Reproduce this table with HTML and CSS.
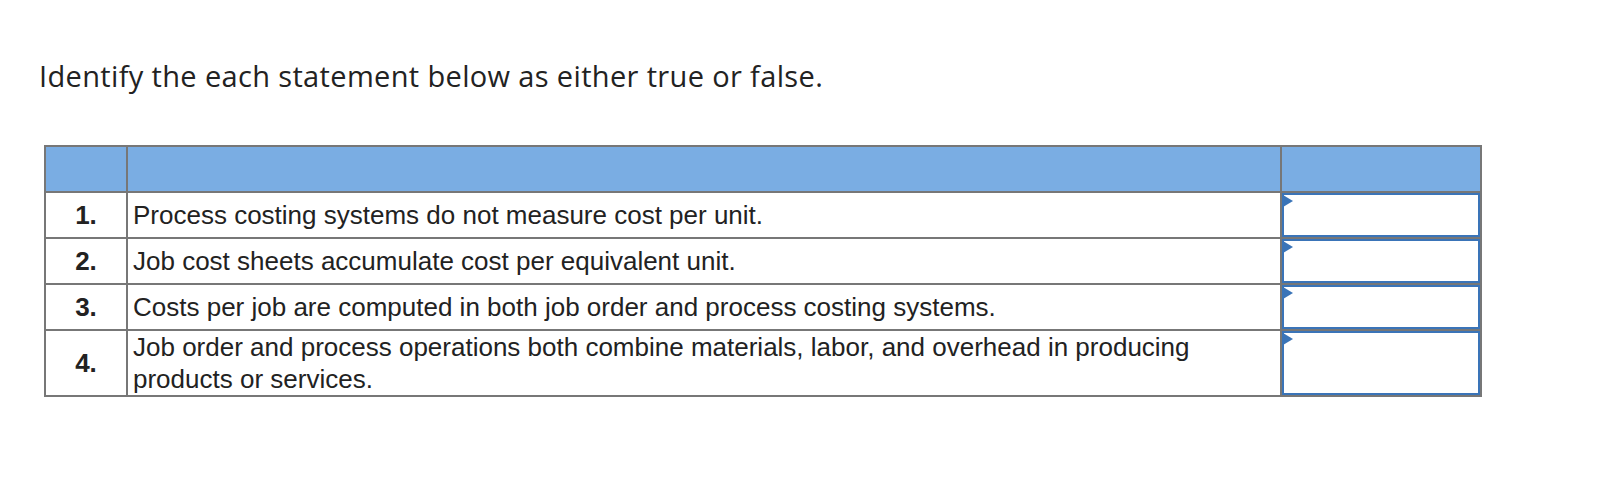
FILE: index.html
```html
<!DOCTYPE html>
<html>
<head>
<meta charset="utf-8">
<link rel="stylesheet" href="styles.css">
</head>
<body>
<div class="page">
  <p class="prompt">Identify the each statement below as either true or false.</p>
  <table class="tf">
    <thead>
      <tr><th class="num"></th><th class="stmt"></th><th class="ans"></th></tr>
    </thead>
    <tbody>
      <tr>
        <td class="num">1.</td>
        <td class="stmt">Process costing systems do not measure cost per unit.</td>
        <td class="ans"><div class="box"><span class="flag"></span></div></td>
      </tr>
      <tr>
        <td class="num">2.</td>
        <td class="stmt">Job cost sheets accumulate cost per equivalent unit.</td>
        <td class="ans"><div class="box"><span class="flag"></span></div></td>
      </tr>
      <tr>
        <td class="num">3.</td>
        <td class="stmt">Costs per job are computed in both job order and process costing systems.</td>
        <td class="ans"><div class="box"><span class="flag"></span></div></td>
      </tr>
      <tr>
        <td class="num">4.</td>
        <td class="stmt">Job order and process operations both combine materials, labor, and overhead in producing<br>products or services.</td>
        <td class="ans"><div class="box tall"><span class="flag"></span></div></td>
      </tr>
    </tbody>
  </table>
</div>
</body>
</html>
```
FILE: styles.css
```css
html, body {
  margin: 0;
  padding: 0;
  background: #fff;
}
.page {
  padding: 54px 0 0 39px;
}
.prompt {
  margin: 0;
  font-family: "Open Sans", Lato, sans-serif;
  font-size: 29px;
  letter-spacing: 0.35px;
  line-height: 44px;
  color: #222;
}
.tf {
  margin: 47px 0 0 5px;
  border-collapse: collapse;
  font-family: "Liberation Sans", Arial, sans-serif;
  font-size: 26px;
  color: #222;
}
.tf th, .tf td {
  border: 2px solid #777;
  padding: 0;
}
.tf th {
  background: #7aade3;
  height: 44px;
}
.tf td {
  height: 44px;
  line-height: 32px;
  vertical-align: middle;
}
.num {
  width: 80px;
  text-align: center;
  font-weight: bold;
}
.stmt {
  width: 1147px;
  padding: 0 0 0 5px !important;
  text-align: left;
}
.ans {
  width: 198px;
}
.box {
  position: relative;
  box-sizing: border-box;
  height: 44px;
  border: 2px solid #3a74b8;
  background: #fff;
}
.box.tall {
  height: 64px;
}
.flag {
  position: absolute;
  left: -1px;
  top: 0;
  width: 0;
  height: 0;
  border-top: 6px solid transparent;
  border-bottom: 6px solid transparent;
  border-left: 10px solid #3a74b8;
}
```
